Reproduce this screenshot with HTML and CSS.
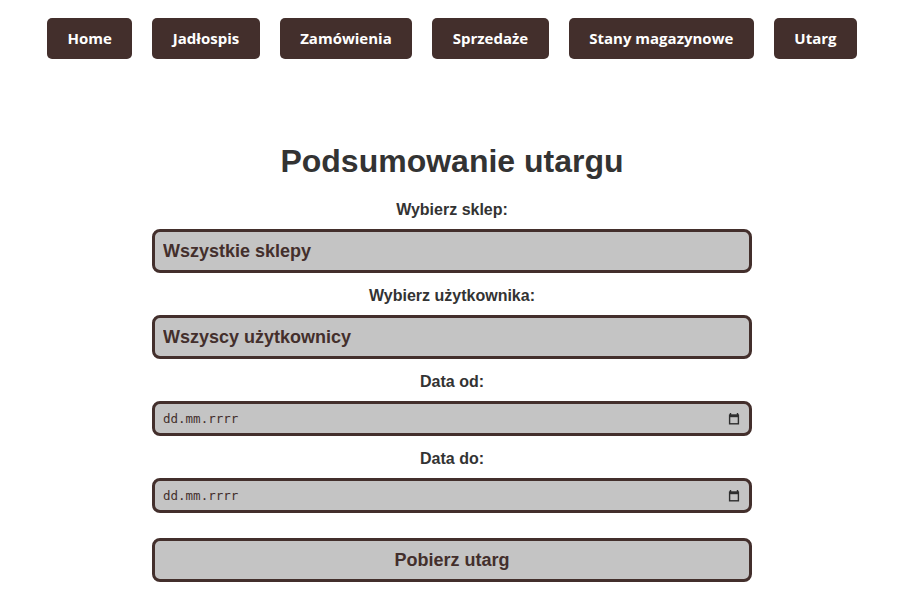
FILE: index.html
```html
<!DOCTYPE html>
<html lang="pl">
<head>
<meta charset="utf-8">
<title>Podsumowanie utargu</title>
<link rel="stylesheet" href="styles.css">
</head>
<body>
<div class="page">
  <nav class="nav">
    <a class="nav-btn" href="#">Home</a>
    <a class="nav-btn" href="#">Jadłospis</a>
    <a class="nav-btn" href="#">Zamówienia</a>
    <a class="nav-btn" href="#">Sprzedaże</a>
    <a class="nav-btn" href="#">Stany magazynowe</a>
    <a class="nav-btn" href="#">Utarg</a>
  </nav>
  <main class="content">
    <h1 class="title">Podsumowanie utargu</h1>
    <form class="form">
      <label class="label first" for="shop">Wybierz sklep:</label>
      <select class="field select" id="shop"><option>Wszystkie sklepy</option></select>
      <label class="label" for="user">Wybierz użytkownika:</label>
      <select class="field select" id="user"><option>Wszyscy użytkownicy</option></select>
      <label class="label">Data od:</label>
      <div class="field date">
        <span class="date-text">dd.mm.rrrr</span>
        <svg class="cal" width="12" height="12" viewBox="0 0 12 12" aria-hidden="true">
          <path d="M2.5 0v2.5M9.5 0v2.5" stroke="#2e2e2e" stroke-width="1.4" fill="none"/>
          <rect x="1.6" y="2.2" width="8.8" height="8.6" fill="none" stroke="#2e2e2e" stroke-width="1.4"/>
          <rect x="1" y="1.6" width="10" height="2.6" fill="#2e2e2e"/>
        </svg>
      </div>
      <label class="label">Data do:</label>
      <div class="field date">
        <span class="date-text">dd.mm.rrrr</span>
        <svg class="cal" width="12" height="12" viewBox="0 0 12 12" aria-hidden="true">
          <path d="M2.5 0v2.5M9.5 0v2.5" stroke="#2e2e2e" stroke-width="1.4" fill="none"/>
          <rect x="1.6" y="2.2" width="8.8" height="8.6" fill="none" stroke="#2e2e2e" stroke-width="1.4"/>
          <rect x="1" y="1.6" width="10" height="2.6" fill="#2e2e2e"/>
        </svg>
      </div>
      <button class="field submit" type="button">Pobierz utarg</button>
    </form>
  </main>
</div>
</body>
</html>
```
FILE: styles.css
```css
html, body {
  margin: 0;
  padding: 0;
  background: #ffffff;
}
.page {
  padding-left: 7px;
  font-family: "Liberation Sans", Arial, sans-serif;
}
.nav {
  display: flex;
  justify-content: center;
  gap: 20px;
  padding-top: 18px;
}
.nav-btn {
  display: block;
  background: #432f2c;
  color: #ffffff;
  font-family: "Open Sans", sans-serif;
  font-weight: 700;
  font-size: 15px;
  line-height: 21px;
  padding: 10px 20.5px;
  border-radius: 5px;
  text-decoration: none;
}
.content {
  display: flex;
  flex-direction: column;
  align-items: center;
  margin-top: 84px;
}
.title {
  margin: 0;
  font-size: 32px;
  line-height: 37px;
  font-weight: 700;
  color: #333333;
}
.form {
  width: 600px;
  display: flex;
  flex-direction: column;
  margin-top: 5px;
}
.label {
  display: block;
  text-align: center;
  font-size: 16px;
  line-height: 20px;
  font-weight: 700;
  color: #333333;
  margin: 13px 0 9px;
}
.label.first {
  margin-top: 15px;
  margin-bottom: 9px;
}
.field {
  box-sizing: border-box;
  width: 600px;
  background: #c4c4c4;
  border: 3px solid #432f2c;
  border-radius: 8px;
  color: #432f2c;
  margin: 0;
}
.select {
  appearance: none;
  -webkit-appearance: none;
  height: 44px;
  padding: 0 8px;
  font-family: "Liberation Sans", Arial, sans-serif;
  font-weight: 700;
  font-size: 18px;
}
.date {
  height: 35px;
  padding: 0 9px 0 8px;
  display: flex;
  align-items: center;
  justify-content: space-between;
}
.date-text {
  font-family: "DejaVu Sans Mono", monospace;
  font-size: 12.5px;
  color: #432f2c;
}
.cal {
  display: block;
}
.submit {
  height: 44px;
  margin-top: 25px;
  font-family: "Liberation Sans", Arial, sans-serif;
  font-weight: 700;
  font-size: 18px;
  cursor: pointer;
}
```
